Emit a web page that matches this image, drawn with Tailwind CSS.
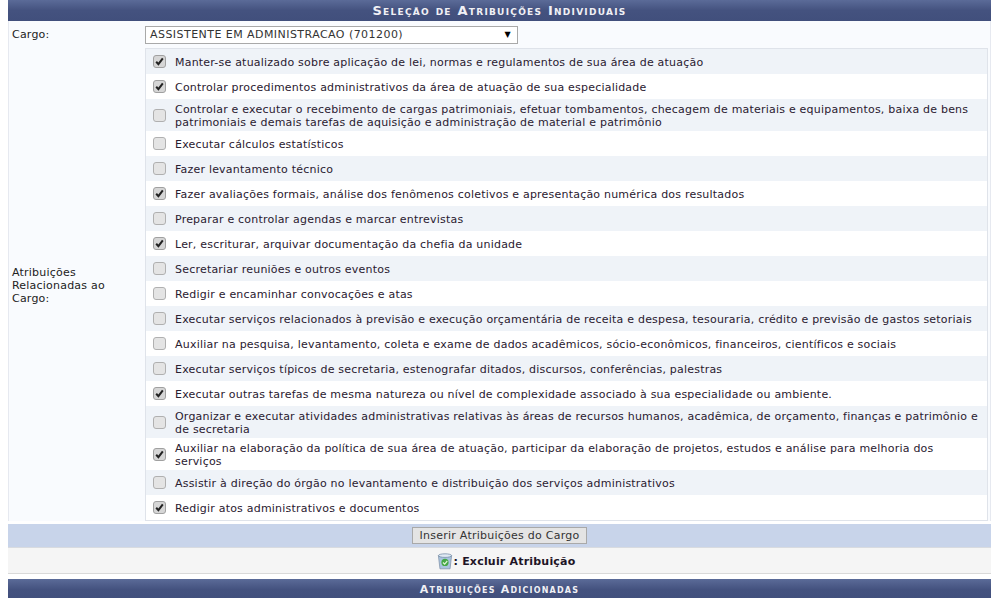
<!DOCTYPE html>
<html lang="pt">
<head>
<meta charset="utf-8">
<title>Seleção de Atribuições Individuais</title>
<script src="https://cdn.jsdelivr.net/npm/@tailwindcss/browser@4"></script>
</head>
<body class="h-[598px] overflow-hidden bg-white font-['DejaVu_Sans',sans-serif] text-[11px] leading-[13px] text-[#222]">
<svg class="hidden"><defs>
<symbol id="c" viewBox="0 0 13 13"><rect x=".5" y=".5" width="12" height="12" rx="2.5" fill="#d6d6d6" stroke="#a0a0a0"/><path d="M3.2 6.8 5.4 9.2 9.8 3.4" fill="none" stroke="#222" stroke-width="2"/></symbol>
<symbol id="u" viewBox="0 0 13 13"><rect x=".5" y=".5" width="12" height="12" rx="2.5" fill="#e4e4e4" stroke="#b0b0b0"/></symbol>
</defs></svg>
<main class="mx-2 w-[983px]">
  <h2 class="flex h-[21px] items-center justify-center bg-gradient-to-b from-[#5b6b98] via-[#44527f] to-[#414f7c] text-[13px] font-bold tracking-[1.25px] text-[#f0f0f5] [font-variant:small-caps]">Seleção de Atribuições Individuais</h2>
  <div class="grid grid-cols-[136px_843px] border-x border-[#e6e9f0] bg-[#f9fbfe] tracking-[0.21px]">
    <div class="col-start-1 flex h-[27px] items-center pl-[3px]"><label>Cargo:</label></div>
    <div class="flex h-[27px] items-center">
      <div class="flex h-[18px] w-[373px] items-center justify-between border border-[#a9a9a9] bg-white pl-[4px] pr-[6px] tracking-[0.45px] text-[#333]"><span>ASSISTENTE EM ADMINISTRACAO (701200)</span><span class="text-[8px] leading-none text-black">▼</span></div>
    </div>
    <div class="flex items-center pl-[3px] pt-[1px]"><label class="w-[100px]">Atribuições Relacionadas ao Cargo:</label></div>
    <div class="w-[843px] border border-[#dfe3ea] bg-white text-[#2a2030]">
      <div class="flex h-[25px] items-center bg-[#eff3f8]"><svg class="ml-[7px] mr-[9px] size-[13px] shrink-0"><use href="#c"/></svg><span class="pt-[1px]">Manter-se atualizado sobre aplicação de lei, normas e regulamentos de sua área de atuação</span></div>
      <div class="flex h-[25px] items-center"><svg class="ml-[7px] mr-[9px] size-[13px] shrink-0"><use href="#c"/></svg><span class="pt-[1px]">Controlar procedimentos administrativos da área de atuação de sua especialidade</span></div>
      <div class="flex h-[32px] items-center bg-[#eff3f8]"><svg class="ml-[7px] mr-[9px] size-[13px] shrink-0"><use href="#u"/></svg><span class="pt-[1px]">Controlar e executar o recebimento de cargas patrimoniais, efetuar tombamentos, checagem de materiais e equipamentos, baixa de bens patrimoniais e demais tarefas de aquisição e administração de material e patrimônio</span></div>
      <div class="flex h-[25px] items-center"><svg class="ml-[7px] mr-[9px] size-[13px] shrink-0"><use href="#u"/></svg><span class="pt-[1px]">Executar cálculos estatísticos</span></div>
      <div class="flex h-[25px] items-center bg-[#eff3f8]"><svg class="ml-[7px] mr-[9px] size-[13px] shrink-0"><use href="#u"/></svg><span class="pt-[1px]">Fazer levantamento técnico</span></div>
      <div class="flex h-[25px] items-center"><svg class="ml-[7px] mr-[9px] size-[13px] shrink-0"><use href="#c"/></svg><span class="pt-[1px]">Fazer avaliações formais, análise dos fenômenos coletivos e apresentação numérica dos resultados</span></div>
      <div class="flex h-[25px] items-center bg-[#eff3f8]"><svg class="ml-[7px] mr-[9px] size-[13px] shrink-0"><use href="#u"/></svg><span class="pt-[1px]">Preparar e controlar agendas e marcar entrevistas</span></div>
      <div class="flex h-[25px] items-center"><svg class="ml-[7px] mr-[9px] size-[13px] shrink-0"><use href="#c"/></svg><span class="pt-[1px]">Ler, escriturar, arquivar documentação da chefia da unidade</span></div>
      <div class="flex h-[25px] items-center bg-[#eff3f8]"><svg class="ml-[7px] mr-[9px] size-[13px] shrink-0"><use href="#u"/></svg><span class="pt-[1px]">Secretariar reuniões e outros eventos</span></div>
      <div class="flex h-[25px] items-center"><svg class="ml-[7px] mr-[9px] size-[13px] shrink-0"><use href="#u"/></svg><span class="pt-[1px]">Redigir e encaminhar convocações e atas</span></div>
      <div class="flex h-[25px] items-center bg-[#eff3f8]"><svg class="ml-[7px] mr-[9px] size-[13px] shrink-0"><use href="#u"/></svg><span class="pt-[1px]">Executar serviços relacionados à previsão e execução orçamentária de receita e despesa, tesouraria, crédito e previsão de gastos setoriais</span></div>
      <div class="flex h-[25px] items-center"><svg class="ml-[7px] mr-[9px] size-[13px] shrink-0"><use href="#u"/></svg><span class="pt-[1px]">Auxiliar na pesquisa, levantamento, coleta e exame de dados acadêmicos, sócio-econômicos, financeiros, científicos e sociais</span></div>
      <div class="flex h-[25px] items-center bg-[#eff3f8]"><svg class="ml-[7px] mr-[9px] size-[13px] shrink-0"><use href="#u"/></svg><span class="pt-[1px]">Executar serviços típicos de secretaria, estenografar ditados, discursos, conferências, palestras</span></div>
      <div class="flex h-[25px] items-center"><svg class="ml-[7px] mr-[9px] size-[13px] shrink-0"><use href="#c"/></svg><span class="pt-[1px]">Executar outras tarefas de mesma natureza ou nível de complexidade associado à sua especialidade ou ambiente.</span></div>
      <div class="flex h-[32px] items-center bg-[#eff3f8]"><svg class="ml-[7px] mr-[9px] size-[13px] shrink-0"><use href="#u"/></svg><span class="pt-[1px]">Organizar e executar atividades administrativas relativas às áreas de recursos humanos, acadêmica, de orçamento, finanças e patrimônio e de secretaria</span></div>
      <div class="flex h-[32px] items-center pr-[8px]"><svg class="ml-[7px] mr-[9px] size-[13px] shrink-0"><use href="#c"/></svg><span class="pt-[1px]">Auxiliar na elaboração da política de sua área de atuação, participar da elaboração de projetos, estudos e análise para melhoria dos serviços</span></div>
      <div class="flex h-[25px] items-center bg-[#eff3f8]"><svg class="ml-[7px] mr-[9px] size-[13px] shrink-0"><use href="#u"/></svg><span class="pt-[1px]">Assistir à direção do órgão no levantamento e distribuição dos serviços administrativos</span></div>
      <div class="flex h-[25px] items-center"><svg class="ml-[7px] mr-[9px] size-[13px] shrink-0"><use href="#c"/></svg><span class="pt-[1px]">Redigir atos administrativos e documentos</span></div>
    </div>
  </div>
  <div class="mt-[3px] flex h-[24px] items-center justify-center border-b border-[#d8dbe0] bg-[#c8d4ea]">
    <button class="h-[17px] w-[175px] border border-[#a9a9a9] bg-[#e4e4e4] text-[11px] leading-none tracking-[0.25px] text-[#333]">Inserir Atribuições do Cargo</button>
  </div>
  <div class="flex h-[26px] items-center justify-center border-b border-[#d9d9d9] bg-[#f5f5f5] pl-[12px] font-bold tracking-[0.2px] text-[#1e1426]">
    <svg class="size-[18px]" viewBox="0 0 15 15"><path d="M2 3h11l-1.3 11H3.3z" fill="#a9c4de" stroke="#7c8ea6" stroke-width=".6"/><ellipse cx="7.5" cy="3" rx="5.5" ry="1.5" fill="#dfe9f3" stroke="#6f86a0" stroke-width=".6"/><circle cx="7.5" cy="8.7" r="3" fill="#45a845"/><path d="M5.8 8.8l1.4 1.3 2.2-2.6" fill="none" stroke="#dff5d8" stroke-width="1"/></svg>
    <span class="pt-[2px]">: Excluir Atribuição</span>
  </div>
  <h2 class="mt-[5px] flex h-[21px] items-center justify-center bg-gradient-to-b from-[#5b6b98] via-[#44527f] to-[#414f7c] text-[11px] font-bold tracking-[1.2px] text-[#f0f0f5] [font-variant:small-caps]">Atribuições Adicionadas</h2>
</main>
</body>
</html>
